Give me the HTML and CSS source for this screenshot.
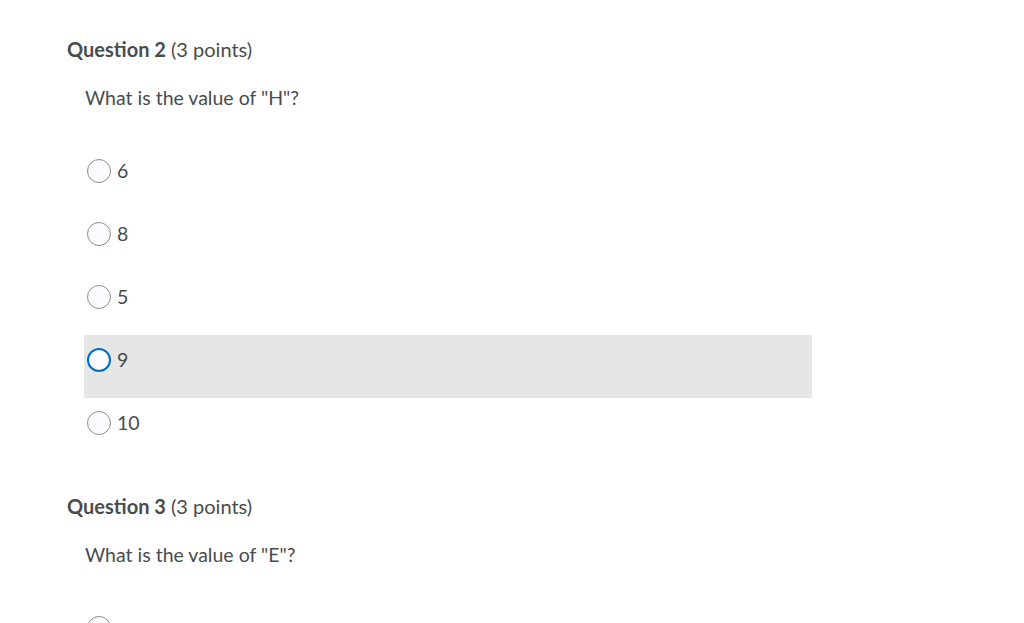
FILE: index.html
```html
<!DOCTYPE html>
<html lang="en">
<head>
<meta charset="utf-8">
<title>Quiz</title>
<link rel="stylesheet" href="styles.css">
</head>
<body>
<main class="page">
  <section class="question">
    <h2 class="q-title"><strong>Question 2</strong> (3 points)</h2>
    <p class="q-text">What is the value of "H"?</p>
    <div class="options">
      <label class="option"><span class="radio"></span><span class="opt-text">6</span></label>
      <label class="option"><span class="radio"></span><span class="opt-text">8</span></label>
      <label class="option"><span class="radio"></span><span class="opt-text">5</span></label>
      <label class="option option-focus"><span class="radio radio-focus"></span><span class="opt-text">9</span></label>
      <label class="option"><span class="radio"></span><span class="opt-text">10</span></label>
    </div>
  </section>
  <section class="question">
    <h2 class="q-title"><strong>Question 3</strong> (3 points)</h2>
    <p class="q-text">What is the value of "E"?</p>
    <div class="options">
      <label class="option"><span class="radio"></span><span class="opt-text"></span></label>
    </div>
  </section>
</main>
</body>
</html>
```

FILE: styles.css
```css
html, body {
  margin: 0;
  padding: 0;
  background: #ffffff;
}
body {
  font-family: Lato, "Open Sans", sans-serif;
  color: #494c4e;
  overflow: hidden;
  height: 623px;
}
.page {
  padding: 36px 0 0 67px;
}
.question {
  margin-bottom: 32px;
}
.q-title {
  margin: 0;
  font-size: 20px;
  line-height: 26px;
  font-weight: 400;
  color: #494c4e;
}
.q-title strong {
  font-weight: 700;
}
.q-text {
  margin: 23px 0 0 18px;
  font-size: 19.5px;
  line-height: 26px;
}
.options {
  margin: 35px 0 0 17px;
  width: 728px;
}
.option {
  display: flex;
  align-items: center;
  gap: 6px;
  height: 63px;
  box-sizing: border-box;
  padding: 13px 0 26px 3px;
}
.option-focus {
  background: #e6e6e6;
}
.radio {
  width: 24px;
  height: 24px;
  box-sizing: border-box;
  border-radius: 50%;
  border: 1px solid #8a8c8e;
  background: #f9fbff;
  flex: none;
}
.radio-focus {
  border: 2px solid #006fbf;
}
.opt-text {
  font-size: 19.5px;
  line-height: 24px;
  color: #494c4e;
}
```
